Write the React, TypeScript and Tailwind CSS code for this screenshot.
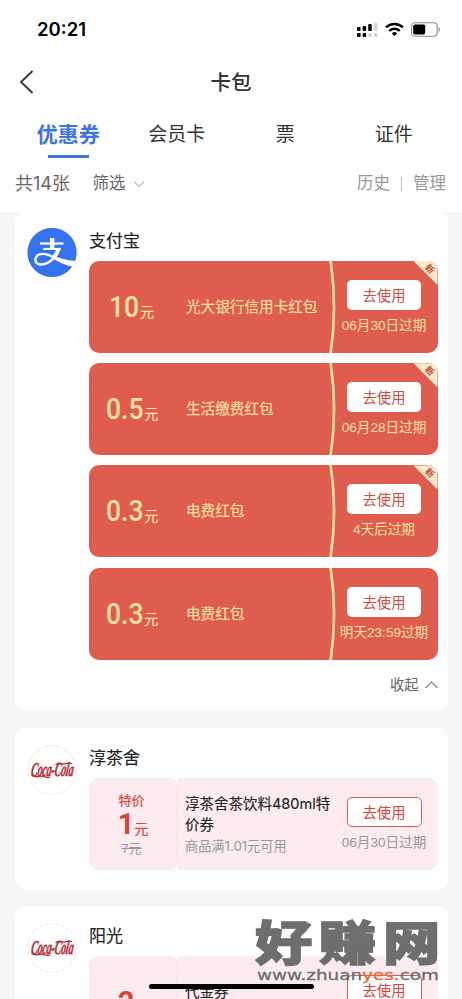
import type { ReactNode } from "react";

type RedPacket = { amount: string; title: string; expiry: string; isNew: boolean };

const redPackets: RedPacket[] = [
  { amount: "10", title: "光大银行信用卡红包", expiry: "06月30日过期", isNew: true },
  { amount: "0.5", title: "生活缴费红包", expiry: "06月28日过期", isNew: true },
  { amount: "0.3", title: "电费红包", expiry: "4天后过期", isNew: true },
  { amount: "0.3", title: "电费红包", expiry: "明天23:59过期", isNew: false },
];

const tabs = ["优惠券", "会员卡", "票", "证件"];

function StatusBar() {
  return (
    <div className="flex h-[58px] items-center justify-between pl-[37px] pr-[21px] pt-px">
      <span className="font-[Inter] text-[18.5px] font-semibold leading-none text-black">20:21</span>
      <div className="flex items-center gap-[7px]">
        {/* Dual SIM signal */}
        <svg width="21" height="16" viewBox="0 0 21 16">
          <rect x="0" y="5" width="3.6" height="4" rx="1" />
          <rect x="5.6" y="4" width="3.6" height="5" rx="1" />
          <rect x="11.2" y="2" width="3.6" height="7" rx="1" />
          <rect x="16.8" y="0.5" width="3.6" height="8.5" rx="1" fill="#d4d4d4" />
          <rect x="0" y="11" width="3.6" height="4" rx="1" />
          <rect x="5.6" y="11" width="3.6" height="4" rx="1" />
          <rect x="11.2" y="11" width="3.6" height="4" rx="1" fill="#d4d4d4" />
          <rect x="16.8" y="11" width="3.6" height="4" rx="1" fill="#d4d4d4" />
        </svg>
        <svg width="19" height="15" viewBox="0 0 19 15" fill="none" stroke="#000" strokeWidth="2.5">
          <path d="M1 5.4a12.2 12.2 0 0 1 17 0" />
          <path d="M4.2 8.9a7.6 7.6 0 0 1 10.6 0" />
          <path d="M9.5 14 6.9 11.4a3.7 3.7 0 0 1 5.2 0Z" fill="#000" stroke="none" />
        </svg>
        <svg width="30" height="15" viewBox="0 0 30 15">
          <rect x="0.6" y="0.8" width="25.6" height="13.4" rx="3.4" fill="none" stroke="#8a8a8a" strokeWidth="1.1" />
          <rect x="2.2" y="2.6" width="12" height="9.8" rx="1.6" />
          <path d="M27.6 5.2c1.8.6 1.8 4 0 4.6Z" fill="#8a8a8a" />
        </svg>
      </div>
    </div>
  );
}

function AlipayLogo() {
  return (
    <svg width="50" height="50" viewBox="0 0 50 50" className="shrink-0">
      <circle cx="25" cy="24.5" r="24.6" fill="#3572ed" />
      <g fill="none" stroke="#fff">
        <path d="M13 15.5h23.5" strokeWidth="2.2" />
        <path d="M16 20.9h18" strokeWidth="2" />
        <path d="M25.2 10v10.8" strokeWidth="4.4" />
        <path
          d="M32.5 20.3c-1.8 5-4.5 9.5-8.2 12.2-4.2 3.4-10.6 5-13.7 3.2-3.6-2.1-2.7-7.7 1.8-9.3 4.5-1.5 9.6.3 14.6 3.4"
          strokeWidth="2.4"
        />
        <path d="M31.8 20.8c-1.5 3.7-3.5 7-6 9.5" strokeWidth="3.8" />
      </g>
      <path d="M26 27.3c6.5 3.2 13.5 5 22.5 5.6-.3 2.2-1 4.2-1.9 6C39 37.5 31.500 34 24.5 29.7Z" fill="#fff" />
    </svg>
  );
}

function CokeLogo() {
  return (
    <svg width="50" height="50" viewBox="0 0 50 50" className="shrink-0">
      <circle cx="25" cy="25" r="24.3" fill="#fff" stroke="#eeeeee" />
      <text
        transform="translate(3.5 31) skewX(-8) scale(0.51 1)"
        fill="#b5303a"
        stroke="#b5303a"
        strokeWidth="0.5"
        className="font-['Liberation_Serif',serif] text-[19.5px] font-bold italic tracking-[-0.3px]"
      >
        Coca-Cola
      </text>
      <g fill="none" stroke="#b5303a" strokeLinecap="round">
        <path d="M5 30.5c3 2.5 6 .8 9 .7 3.5-.1 5.5 2.2 8.5 1" strokeWidth="1.3" />
        <path d="M29 19.5c4-3.2 6 .4 9.5-.6 2.5-.7 4.5-1.4 6-.4" strokeWidth="1.3" />
      </g>
    </svg>
  );
}

function Shop({ logo, name, children }: { logo: ReactNode; name: string; children: ReactNode }) {
  return (
    <section className="flex rounded-[10px] bg-white pb-[19px] pl-3 pr-2.5 pt-[17px]">
      {logo}
      <div className="ml-[12.5px] min-w-0 flex-1">
        <h2 className="mb-[5px] h-[28px] text-[17px] leading-[28px] text-[#222] [-webkit-text-stroke:0.15px_#222]">{name}</h2>
        {children}
      </div>
    </section>
  );
}

function RedPacketCard({ amount, title, expiry, isNew }: RedPacket) {
  return (
    <div className="relative flex h-[92px] overflow-hidden rounded-[10px] bg-[#de5d4e] text-[#fbe1a2]">
      <div className="flex w-[84px] shrink-0 items-center justify-center pr-[3px]">
        <div className="flex items-baseline">
          <span className="inline-block origin-right scale-x-[0.88] font-[Roboto] text-[30px] font-medium leading-none">
            {amount}
          </span>
          <span className="ml-px text-[14px] leading-none [-webkit-text-stroke:0.2px_#fbe1a2]">元</span>
        </div>
      </div>
      <p className="flex flex-1 items-center pl-[13px] pt-[2px] text-[14.6px] [-webkit-text-stroke:0.15px_#fbe1a2]">{title}</p>
      <svg width="8" height="92" viewBox="0 0 8 92" className="shrink-0">
        <path d="M1.5-1Q8.500 46 1.5 93" fill="none" stroke="#fbe1a2" strokeWidth="2.6" />
      </svg>
      <div className="-ml-[6px] flex w-[107px] shrink-0 flex-col items-center pt-[19px]">
        <button className="h-[30px] w-[74px] rounded-[5px] bg-white text-[14.3px] leading-[32px] text-[#c94f45]">去使用</button>
        <span className="mt-[6px] whitespace-nowrap text-[13.6px] leading-5">{expiry}</span>
      </div>
      {isNew && (
        <div className="absolute right-0 top-0 h-6 w-6 bg-[#fdebcb] [clip-path:polygon(0_0,100%_0,100%_100%)]">
          <span className="absolute left-[11px] top-[2px] rotate-45 text-[9px] font-bold leading-3 text-[#b5503f]">新</span>
        </div>
      )}
    </div>
  );
}

type Voucher = { label?: string; price: string; original?: string; title: string; note?: string; expiry: string };

function VoucherCard({ label, price, original, title, note, expiry }: Voucher) {
  return (
    <div className="flex h-[92px] rounded-[10px] text-[#d8433c]">
      <div className="flex w-[88px] shrink-0 flex-col items-center rounded-[10px] rounded-br-md rounded-tr-md bg-[#fcebef] pt-[14px]">
        <span className="h-[18px] pr-[3px] text-[13px] leading-[18px] [-webkit-text-stroke:0.2px_#d8433c]">{label}</span>
        <div className="flex h-7 items-baseline">
          <span className="font-[Roboto] text-[29px] font-bold leading-7">{price}</span>
          <span className="text-[14px] leading-none [-webkit-text-stroke:0.2px_#d8433c]">元</span>
        </div>
        <span className="h-[18px] pr-[3px] text-[13px] leading-[21px] text-[#999] line-through">{original}</span>
      </div>
      <div className="flex min-w-0 flex-1 rounded-[10px] rounded-bl-md rounded-tl-md border-l border-dashed border-[#f3d5db] bg-[#fcebef] font-[Inter,'Noto_Sans_CJK_SC',sans-serif]">
        <div className="flex min-w-0 flex-1 flex-col justify-center pl-[7px] pt-px">
          <p className="whitespace-pre text-[14.5px] leading-[21px] text-[#222] [-webkit-text-stroke:0.15px_#222]">{title}</p>
          {note && <p className="min-h-[22px] text-[13.2px] leading-[22px] text-[#999]">{note}</p>}
        </div>
        <div className="flex w-[107px] shrink-0 flex-col items-center pt-[19px]">
          <button className="h-[30px] w-[75px] rounded-[5px] border border-[#d2604f] bg-white text-[14.3px] leading-[30px]">
            去使用
          </button>
          <span className="mt-[6px] whitespace-nowrap font-['Liberation_Sans','Noto_Sans_CJK_SC',sans-serif] text-[13.6px] leading-5 text-[#999]">
            {expiry}
          </span>
        </div>
      </div>
    </div>
  );
}

function Watermark() {
  return (
    <div className="absolute left-[255px] top-[917px] w-[207px]">
      <svg width="207" height="68" viewBox="0 0 207 68" fill="#6e6e6e">
        <text
          transform="translate(0 43) scale(1.22 1)"
          stroke="#6e6e6e"
          strokeWidth="1.4"
          className="font-['Noto_Sans_CJK_SC',sans-serif] text-[47px] font-black tracking-[5.5px]"
        >
          好赚网
        </text>
        <text
          x="2"
          y="62.5"
          textLength="182"
          lengthAdjust="spacingAndGlyphs"
          stroke="#6e6e6e"
          strokeWidth="0.3"
          className="font-['DejaVu_Sans',sans-serif] text-[14.5px]"
        >
          www.zhuan
          <tspan fill="#f2643a" stroke="#f2643a">yes.</tspan>
          com
        </text>
      </svg>
    </div>
  );
}

export default function App() {
  return (
    <div className="relative h-[999px] w-[462px] overflow-hidden bg-[#f6f6f6] font-['Liberation_Sans','Noto_Sans_CJK_SC',sans-serif]">
      <header className="h-[212px] bg-white">
        <StatusBar />
        {/* Title bar */}
        <div className="grid h-12 grid-cols-3 items-center px-[19px]">
          <svg width="15" height="24" viewBox="0 0 15 24" fill="none" stroke="#333" strokeWidth="1.8">
            <path d="M13.5 1 2 12l11.5 11" />
          </svg>
          <h1 className="pt-[2px] text-center text-[20.5px] font-medium text-[#333]">卡包</h1>
        </div>
        <nav className="grid h-[53px] grid-cols-4 px-[14px] text-center text-[19px] text-[#333]">
          {tabs.map((tab, i) => (
            <div key={tab} className="flex flex-col items-center pt-[13px]">
              {i === 0 ? (
                <>
                  <span className="text-[21px] font-bold leading-8 text-[#3f74dc]">{tab}</span>
                  <span className="mt-[4px] h-[2.5px] w-[41px] bg-[#3f74dc]" />
                </>
              ) : (
                <span className="leading-8">{tab}</span>
              )}
            </div>
          ))}
        </nav>
        {/* Filter row */}
        <div className="flex h-12 items-center pl-[15px] pr-4 pt-px text-[16.5px] text-[#666]">
          <span className="w-[56px] whitespace-nowrap font-[Inter,'Noto_Sans_CJK_SC',sans-serif] text-[18px]">共14张</span>
          <span className="ml-[21.5px]">筛选</span>
          <svg width="12" height="8" viewBox="0 0 12 8" fill="none" stroke="#bbb" strokeWidth="1.2" className="ml-[7px]">
            <path d="m1 1.5 5 5 5-5" />
          </svg>
          <span className="ml-auto text-[#999]">历史</span>
          <span className="mx-[11px] h-[14px] w-px bg-[#bbb]" />
          <span className="text-[#999]">管理</span>
        </div>
      </header>

      <main className="-mt-px flex flex-col gap-[17px] px-[14.5px]">
        <Shop logo={<AlipayLogo />} name="支付宝">
          <div className="flex flex-col gap-[10.2px]">
            {redPackets.map((packet, i) => (
              <RedPacketCard key={i} {...packet} />
            ))}
          </div>
          <div className="mt-[17px] flex h-[15.5px] items-center justify-end pt-px text-[14.3px] leading-5 text-[#666]">
            收起
            <svg width="13" height="8" viewBox="0 0 13 8" fill="none" stroke="#888" strokeWidth="1.2" className="ml-[6px]">
              <path d="m.5 7 6-6 6 6" />
            </svg>
          </div>
        </Shop>
        <Shop logo={<CokeLogo />} name="淳茶舍">
          <VoucherCard
            label="特价"
            price="1"
            original="7元"
            title={"淳茶舍茶饮料480ml特\n价券"}
            note="商品满1.01元可用"
            expiry="06月30日过期"
          />
        </Shop>
        <Shop logo={<CokeLogo />} name="阳光">
          <VoucherCard price="2" title="代金券" note=" " expiry="06月30日过期" />
        </Shop>
      </main>

      {/* Home indicator */}
      <div className="absolute left-[149px] top-[983.5px] h-[5px] w-[165px] rounded-full bg-black" />
      <Watermark />
    </div>
  );
}
